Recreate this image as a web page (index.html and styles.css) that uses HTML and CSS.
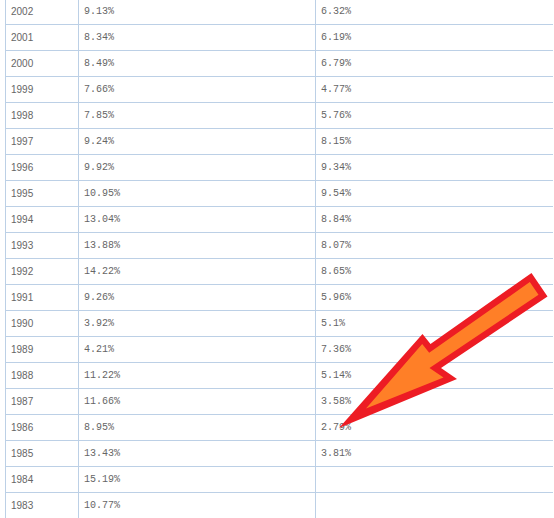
FILE: index.html
```html
<!DOCTYPE html>
<html lang="zh">
<head>
<meta charset="utf-8">
<title>Rates</title>
<link rel="stylesheet" href="styles.css">
</head>
<body>
<div class="page">
  <div class="grid">
    <div class="row"><div class="cell year">2002</div><div class="cell pct">9.13%</div><div class="cell pct">6.32%</div></div>
    <div class="row"><div class="cell year">2001</div><div class="cell pct">8.34%</div><div class="cell pct">6.19%</div></div>
    <div class="row"><div class="cell year">2000</div><div class="cell pct">8.49%</div><div class="cell pct">6.79%</div></div>
    <div class="row"><div class="cell year">1999</div><div class="cell pct">7.66%</div><div class="cell pct">4.77%</div></div>
    <div class="row"><div class="cell year">1998</div><div class="cell pct">7.85%</div><div class="cell pct">5.76%</div></div>
    <div class="row"><div class="cell year">1997</div><div class="cell pct">9.24%</div><div class="cell pct">8.15%</div></div>
    <div class="row"><div class="cell year">1996</div><div class="cell pct">9.92%</div><div class="cell pct">9.34%</div></div>
    <div class="row"><div class="cell year">1995</div><div class="cell pct">10.95%</div><div class="cell pct">9.54%</div></div>
    <div class="row"><div class="cell year">1994</div><div class="cell pct">13.04%</div><div class="cell pct">8.84%</div></div>
    <div class="row"><div class="cell year">1993</div><div class="cell pct">13.88%</div><div class="cell pct">8.07%</div></div>
    <div class="row"><div class="cell year">1992</div><div class="cell pct">14.22%</div><div class="cell pct">8.65%</div></div>
    <div class="row"><div class="cell year">1991</div><div class="cell pct">9.26%</div><div class="cell pct">5.96%</div></div>
    <div class="row"><div class="cell year">1990</div><div class="cell pct">3.92%</div><div class="cell pct">5.1%</div></div>
    <div class="row"><div class="cell year">1989</div><div class="cell pct">4.21%</div><div class="cell pct">7.36%</div></div>
    <div class="row"><div class="cell year">1988</div><div class="cell pct">11.22%</div><div class="cell pct">5.14%</div></div>
    <div class="row"><div class="cell year">1987</div><div class="cell pct">11.66%</div><div class="cell pct">3.58%</div></div>
    <div class="row"><div class="cell year">1986</div><div class="cell pct">8.95%</div><div class="cell pct">2.79%</div></div>
    <div class="row"><div class="cell year">1985</div><div class="cell pct">13.43%</div><div class="cell pct">3.81%</div></div>
    <div class="row"><div class="cell year">1984</div><div class="cell pct">15.19%</div><div class="cell pct"></div></div>
    <div class="row"><div class="cell year">1983</div><div class="cell pct">10.77%</div><div class="cell pct"></div></div>
  </div>
  <svg class="arrow" width="554" height="518" viewBox="0 0 554 518" aria-hidden="true">
    <polygon fill="#ED1C24" points="339,428 422.5,334 430.5,344 531.5,273 547.5,296.5 441,368 457,379"/>
    <polygon fill="#FF7F27" points="366,408.5 422.2,344.1 429.2,352.8 529.8,282.1 538.5,294.8 429.5,368 443.5,377.6"/>
  </svg>
</div>
</body>
</html>
```
FILE: styles.css
```css
html, body {
  margin: 0;
  padding: 0;
  background: #ffffff;
  overflow: hidden;
}

.page {
  position: relative;
  width: 554px;
  height: 518px;
  overflow: hidden;
}

.grid {
  margin: -1px 0 0 5px;
  width: 548px;
}

.row {
  display: grid;
  grid-template-columns: 73px 237px 238px;
  height: 26px;
  box-sizing: border-box;
  border-bottom: 1px solid #bcd0e6;
}

.cell {
  box-sizing: border-box;
  border-left: 1px solid #bcd0e6;
  padding: 1px 0 0 5px;
  line-height: 24px;
  color: #666666;
  white-space: nowrap;
}

.year {
  font-family: "Liberation Sans", Arial, sans-serif;
  font-size: 10px;
}

.pct {
  font-family: "Liberation Mono", "Courier New", monospace;
  font-size: 10px;
}

.arrow {
  position: absolute;
  left: 0;
  top: 0;
  pointer-events: none;
}
```
